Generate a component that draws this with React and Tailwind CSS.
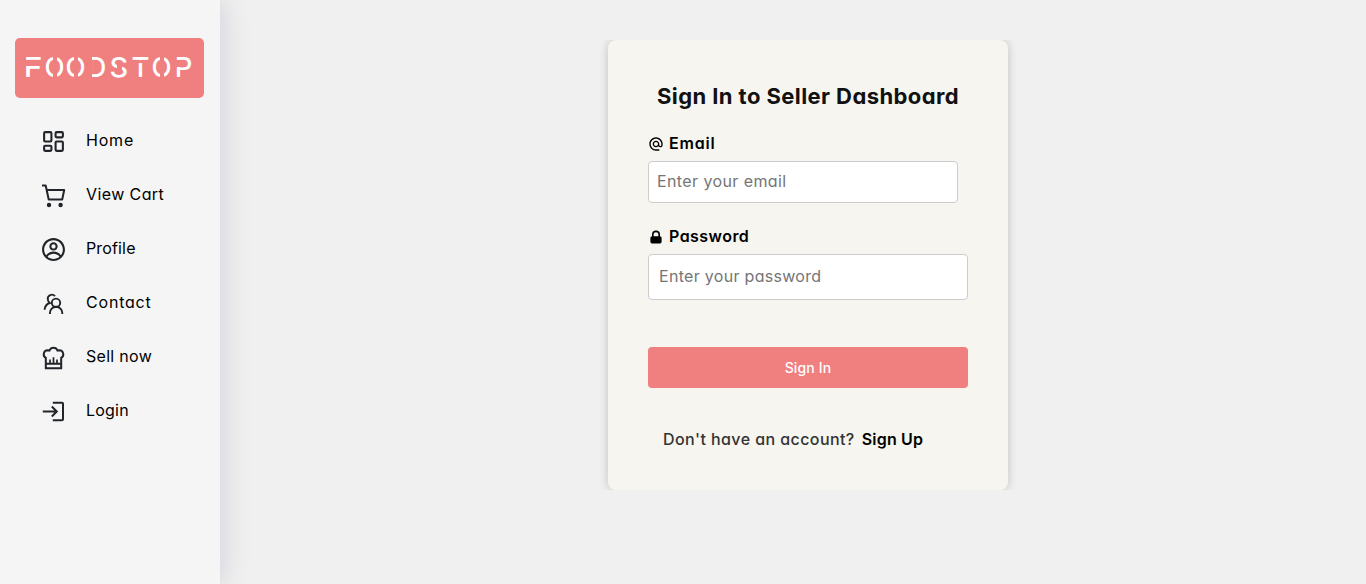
import { LuLayoutDashboard } from "react-icons/lu";
import { CgProfile } from "react-icons/cg";
import { MdAlternateEmail } from "react-icons/md";
import { HiLockClosed } from "react-icons/hi";

const stroke = { fill: "none", stroke: "currentColor", strokeWidth: 2 };

function CartIcon() {
  return (
    <svg viewBox="0 0 25 25" className="size-[25px]" {...stroke}>
      <path d="M1 2.500h3.700l3 14h13.500l2-9.500H6" strokeLinejoin="round" />
      <circle cx="8" cy="22" r="2.2" fill="currentColor" stroke="none" />
      <circle cx="19.600" cy="22" r="2.2" fill="currentColor" stroke="none" />
    </svg>
  );
}

function ContactIcon() {
  return (
    <svg viewBox="0 0 25 25" className="size-[25px]" {...stroke} strokeWidth="1.900">
      <circle cx="15" cy="11.800" r="4.200" />
      <path d="M8.900 23v-1a6.200 6.200 0 0 1 12.400 0v1" />
      <path d="M14 5.200A4.100 4.100 0 0 0 6.800 8.500Q7 10.500 8.800 12Q4 13.500 3.600 18.800" />
    </svg>
  );
}

function ChefIcon() {
  return (
    <svg viewBox="0 0 25 25" className="size-[25px]" {...stroke}>
      <path d="M4.800 23.200V12.800A4 4 0 0 1 6.600 5.300Q8 5.300 8.500 5.500A4.300 4.300 0 0 1 16.500 5.500Q17 5.300 18.400 5.300A4 4 0 0 1 20.200 12.800V23.200ZM4.800 18.800H20.200" />
      <path d="M9 18V14.500M12.500 18V12.200M16 18V14.500" strokeWidth="1.700" />
    </svg>
  );
}

function LoginIcon() {
  return (
    <svg viewBox="0 0 25 25" className="size-[25px]" {...stroke}>
      <path d="M11.800 3.800h9.200a1 1 0 0 1 1 1v15.400a1 1 0 0 1-1 1h-9.200M1.800 12.500H15.500M10.800 7.500L15.800 12.500L10.800 17.500" />
    </svg>
  );
}

const items = [
  { label: "Home", icon: <LuLayoutDashboard size={25} />, text: "tracking-[0.8px]" },
  { label: "View Cart", icon: <CartIcon />, text: "tracking-[0.4px]" },
  { label: "Profile", icon: <CgProfile size={25} />, text: "tracking-[0.15px]" },
  { label: "Contact", icon: <ContactIcon />, text: "tracking-[0.8px]" },
  { label: "Sell now", icon: <ChefIcon />, text: "tracking-[0.3px]" },
  { label: "Login", icon: <LoginIcon />, text: "tracking-[0.2px]" },
];

const ring = "inset-y-0 left-[7.5px] w-[4px]";
const logo = [
  ["F", "w-[15px]", "translate-x-px scale-x-115", "-left-1 top-[22px] h-[6px] w-6"],
  ["O", "ml-[5px] w-[19px]", "scale-x-95", ring],
  ["O", "ml-[2px] w-[19px]", "scale-x-95", ring],
  ["D", "ml-[5px] w-[15px]", "-translate-x-px", "inset-y-0 -left-[5px] w-[6.5px]"],
  ["S", "ml-[6px] w-[16px]", "scale-x-105", "left-[5.5px] top-[24px] h-[11px] w-[5px]"],
  ["T", "ml-[5px] w-[17px]", "", "left-0 top-[22px] h-[3px] w-[17px]"],
  ["O", "ml-[3px] w-[19px]", "scale-x-95", ring],
  ["P", "ml-[5px] w-[15px]", "", "-left-1 top-[22px] h-[7px] w-[9px]"],
];

export default function App() {
  return (
    <div className="flex h-[584px] w-full bg-[#f0f0f0] font-['Inter',sans-serif] text-base text-black [font-feature-settings:'cv11']">
      <aside className="flex w-[220px] shrink-0 flex-col bg-[#f5f5f5] pt-[38px] shadow-[0_0_30px_rgba(8,7,80,0.15)]">
        <div className="ml-[15px] flex h-[60px] w-[189px] rounded-[5px] bg-[#f08080] pl-[10px] text-[27.5px] font-medium leading-[58px] text-white">
          {logo.map(([c, box, glyph, cut], i) => (
            <span key={i} className={"relative flex shrink-0 justify-center " + box}>
              <span className={"block " + glyph}>{c}</span>
              <span className={"absolute bg-[#f08080] " + cut} />
            </span>
          ))}
        </div>
        <nav className="mt-4 flex flex-col">
          {items.map((it) => (
            <a key={it.label} className="flex h-[54px] items-center pl-[41px]">
              <span className="flex w-[45px] text-[#212529]">{it.icon}</span>
              <span className={"pb-[2px] " + it.text}>{it.label}</span>
            </a>
          ))}
        </nav>
      </aside>
      <main className="flex flex-1 items-start pl-[368px] pt-10">
        <div className="overflow-hidden px-5">
          <form className="flex h-[450px] w-[400px] flex-col rounded-lg bg-[#f6f5ef] px-10 pt-10 shadow-[0_0_10px_rgba(0,0,0,0.2)]">
            <h2 className="ml-[9px] h-[34px] whitespace-nowrap text-[22px] font-bold leading-[33px] tracking-[0.42px] text-[#111]">Sign In to Seller Dashboard</h2>
            <label className="mt-[17px] flex h-6 items-center gap-[5px] font-semibold tracking-[0.8px]"><MdAlternateEmail size={16} className="mt-[2px]" /><span>Email</span></label>
            <input className="mt-[6px] h-[42px] w-[310px] rounded-[4px] border border-[#ccc] bg-white px-2 pb-[2px] tracking-[0.4px] placeholder:text-[#757575]" placeholder="Enter your email" />
            <label className="mt-[21px] flex h-6 items-center gap-[5px] font-semibold tracking-[0.45px]"><HiLockClosed size={16} className="mt-[2px]" /><span>Password</span></label>
            <input className="mt-[6px] h-[46px] w-[320px] rounded-[4px] border border-[#ccc] bg-white px-[10px] pb-[2px] tracking-[0.3px] placeholder:text-[#757575]" placeholder="Enter your password" />
            <button type="button" className="mt-[47px] h-[41px] rounded-[4px] bg-[#f08080] text-sm font-medium tracking-[0.15px] text-white">Sign In</button>
            <p className="ml-[15px] mt-[39px] flex whitespace-nowrap font-medium leading-6 text-[#333]"><span className="tracking-[0.42px]">Don't have an account?</span><a className="ml-[7px] font-semibold tracking-[0.2px] text-black">Sign Up</a></p>
          </form>
        </div>
      </main>
    </div>
  );
}
